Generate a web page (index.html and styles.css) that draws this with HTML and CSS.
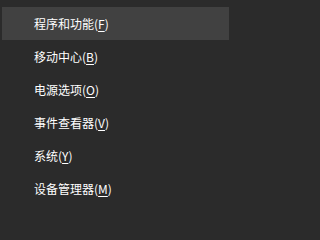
FILE: index.html
```html
<!DOCTYPE html>
<html lang="zh-CN">
<head>
<meta charset="utf-8">
<link rel="stylesheet" href="styles.css">
</head>
<body>
<ul class="menu">
  <li class="item active">程序和功能(<u>F</u>)</li>
  <li class="item">移动中心(<u>B</u>)</li>
  <li class="item">电源选项(<u>O</u>)</li>
  <li class="item">事件查看器(<u>V</u>)</li>
  <li class="item">系统(<u>Y</u>)</li>
  <li class="item">设备管理器(<u>M</u>)</li>
</ul>
</body>
</html>
```
FILE: styles.css
```css
html, body {
  margin: 0;
  padding: 0;
  background: #2b2b2b;
}
body {
  width: 229px;
  height: 209px;
  overflow: hidden;
  font-family: "Noto Sans CJK SC", "Noto Sans", sans-serif;
}
.menu {
  list-style: none;
  margin: 0;
  padding: 7px 0 0 2px;
}
.item {
  height: 33px;
  line-height: 33px;
  padding-left: 32px;
  font-size: 12px;
  color: #ffffff;
  white-space: nowrap;
}
.item u {
  text-decoration: underline;
  text-underline-offset: 2px;
}
.active {
  background: #414141;
}
```
